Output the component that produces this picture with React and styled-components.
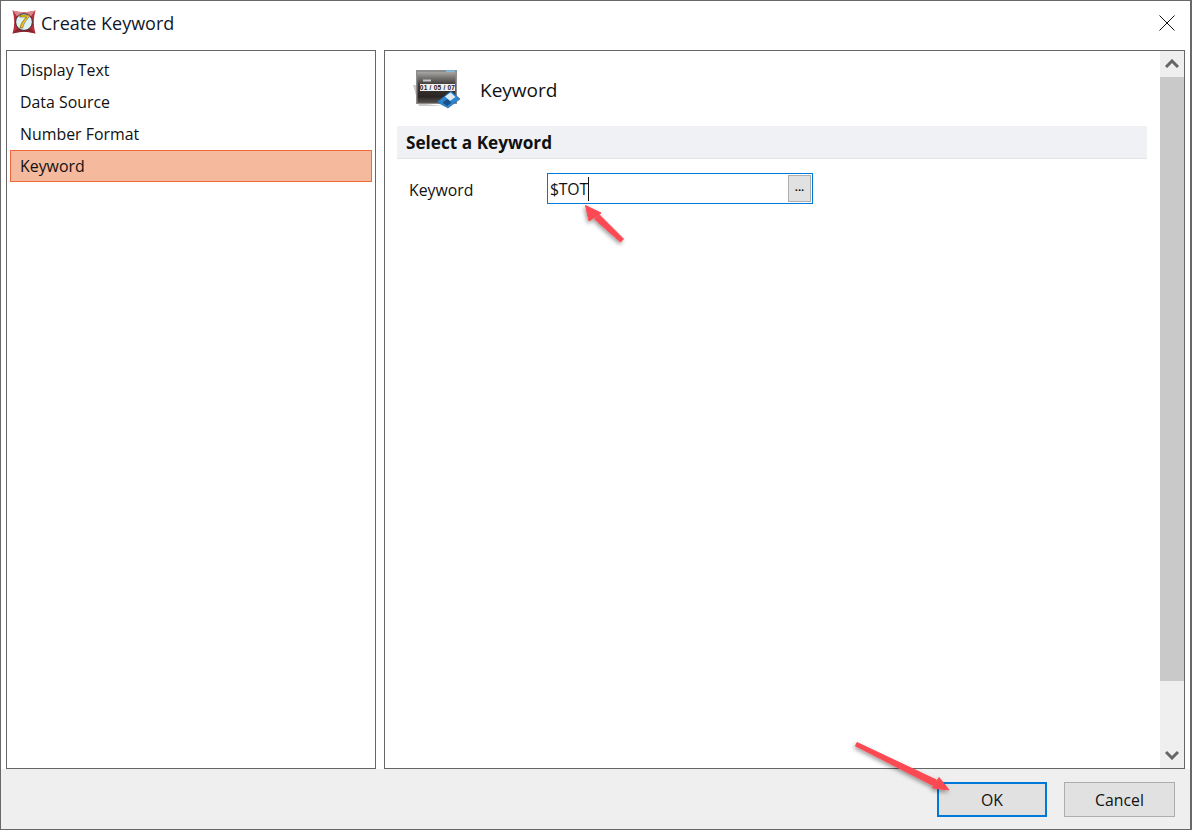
import React from "react";
import styled, { createGlobalStyle } from "styled-components";

const GlobalStyle = createGlobalStyle`
  html, body {
    margin: 0;
    padding: 0;
    background: #fff;
  }
  body {
    font-family: "Open Sans", "Noto Sans", "Liberation Sans", sans-serif;
    color: #111;
  }
`;

const Dialog = styled.div`
  position: relative;
  box-sizing: border-box;
  width: 1192px;
  height: 830px;
  border: 1px solid #686868;
  border-right-width: 2px;
  display: flex;
  flex-direction: column;
  background: #fff;
  overflow: hidden;
`;

const TitleBar = styled.div`
  height: 49px;
  flex: none;
  display: flex;
  align-items: center;
  padding: 0 15px 6px 11px;
  gap: 5px;
  box-sizing: border-box;
`;

const LogoMark = styled.svg`
  flex: none;
  margin-bottom: 2px;
`;

const Title = styled.div`
  font-size: 18px;
  flex: 1;
  color: #101828;
`;

const CloseIcon = styled.svg`
  flex: none;
`;

const Body = styled.div`
  flex: 1;
  display: flex;
  gap: 8px;
  padding: 0 5px 0 5px;
  min-height: 0;
`;

const Panel = styled.div`
  box-sizing: border-box;
  border: 1px solid #666;
  background: #fff;
`;

const NavPanel = styled(Panel)`
  width: 370px;
  flex: none;
  padding: 3px;
`;

const NavItem = styled.div`
  box-sizing: border-box;
  height: 32px;
  display: flex;
  align-items: center;
  padding-left: 9px;
  font-size: 15.9px;
  border: 1px solid ${(p) => (p.$active ? "#f0693a" : "transparent")};
  background: ${(p) => (p.$active ? "#f5b99d" : "transparent")};
`;

const ContentPanel = styled(Panel)`
  flex: 1;
  display: flex;
  min-width: 0;
`;

const Content = styled.div`
  flex: 1;
  min-width: 0;
  padding: 0 13px 0 12px;
`;

const Heading = styled.div`
  height: 75px;
  display: flex;
  align-items: center;
  padding: 2px 0 0 16px;
  box-sizing: border-box;
  gap: 20px;
`;

const HeadingText = styled.div`
  font-size: 19px;
  margin-left: -1px;
`;

const Section = styled.div`
  box-sizing: border-box;
  height: 33px;
  background: #f0f1f5;
  border-bottom: 1px solid #e3e3e6;
  display: flex;
  align-items: center;
  padding: 1px 0 0 9px;
  font-size: 17.2px;
  font-weight: 700;
`;

const FieldRow = styled.div`
  display: flex;
  align-items: center;
  margin-top: 14px;
  padding-left: 13px;
`;

const FieldLabel = styled.div`
  width: 137px;
  font-size: 15.8px;
  padding-top: 2px;
  margin-left: -1px;
  margin-right: 1px;
`;

const FieldInput = styled.div`
  box-sizing: border-box;
  width: 266px;
  height: 31px;
  border: 1px solid #0078d7;
  display: flex;
  align-items: center;
  justify-content: space-between;
  padding: 0 1px 0 2px;
  font-size: 15.8px;
`;

const FieldValue = styled.div`
  border-right: 1px solid #111;
  line-height: 24px;
  height: 24px;
  letter-spacing: -0.2px;
`;

const BrowseButton = styled.div`
  box-sizing: border-box;
  width: 23px;
  height: 27px;
  background: #e1e1e1;
  border: 1px solid #adadad;
  display: flex;
  align-items: center;
  justify-content: center;
  font-size: 11px;
  font-weight: 700;
  padding-bottom: 4px;
`;

const Scrollbar = styled.div`
  width: 24px;
  flex: none;
  background: #efefef;
  display: flex;
  flex-direction: column;
`;

const ScrollButton = styled.div`
  height: 26px;
  flex: none;
  display: flex;
  align-items: center;
  justify-content: center;
`;

const Chevron = styled.svg`
  transform: ${(p) => (p.$down ? "rotate(180deg)" : "none")};
`;

const ScrollThumb = styled.div`
  height: 604px;
  flex: none;
  background: #c9c9c9;
`;

const ScrollTrack = styled.div`
  flex: 1;
`;

const Footer = styled.div`
  height: 60px;
  flex: none;
  background: #efefef;
  display: flex;
  justify-content: flex-end;
  align-items: flex-start;
  gap: 17px;
  padding: 13px 15px 0 0;
  box-sizing: border-box;
`;

const Button = styled.div`
  box-sizing: border-box;
  width: ${(p) => (p.$primary ? "110px" : "111px")};
  height: 35px;
  background: #e1e1e1;
  border: ${(p) => (p.$primary ? "2px solid #0078d7" : "1px solid #adadad")};
  display: flex;
  align-items: center;
  justify-content: center;
  font-size: 15.8px;
`;

const ArrowLayer = styled.svg`
  position: absolute;
  left: -1px;
  top: -1px;
  width: 1192px;
  height: 830px;
  pointer-events: none;
`;

const AppLogo = () => (
  <LogoMark width="24" height="24" viewBox="0 0 24 24">
    <path d="M0.5 0.5 Q12 4 23.5 0.5 Q20 12 23.5 23.5 Q12 20 0.5 23.5 Q4 12 0.5 0.5Z" fill="#b5303c" />
    <path d="M0.5 0.5 Q12 4 23.5 0.5 L19 6 L5 6Z" fill="#d9868c" />
    <path d="M0.5 23.5 Q12 20 23.5 23.5 L19 19 L5 19Z" fill="#8d2530" />
    <circle cx="12" cy="12" r="8.4" fill="#dff2f4" stroke="#3a2a2c" strokeWidth="1" />
    <text x="11.6" y="18.4" textAnchor="middle" fontFamily="Liberation Sans, sans-serif" fontWeight="700" fontStyle="italic" fontSize="18" fill="#f7cc1c" stroke="#4a3410" strokeWidth="0.45">7</text>
  </LogoMark>
);

const KeywordIcon = () => (
  <svg width="48" height="42" viewBox="0 0 48 42">
    <defs>
      <linearGradient id="screen" x1="0" y1="0" x2="0" y2="1">
        <stop offset="0" stopColor="#a6a6a4" />
        <stop offset="0.4" stopColor="#3f3a38" />
        <stop offset="0.8" stopColor="#2a2523" />
        <stop offset="1" stopColor="#5a5552" />
      </linearGradient>
    </defs>
    <path d="M0 16 L4 16 L4 34 L30 37 L6 37Z" fill="#b9b9b9" opacity="0.75" />
    <rect x="3" y="1" width="41" height="34" fill="#8d8d8b" />
    <rect x="4.5" y="3" width="38" height="31" fill="url(#screen)" />
    <rect x="33" y="1.3" width="9" height="1.6" fill="#7fc0e8" />
    <rect x="10" y="10.5" width="8" height="2" fill="#c6c6c6" />
    <rect x="7" y="15" width="35" height="7" fill="#f1f1f1" />
    <text x="24.5" y="21.2" textAnchor="middle" fontFamily="Liberation Sans, sans-serif" fontWeight="700" fontSize="6.6" letterSpacing="0.2" fill="#222">01 / 05 / 07</text>
    <path d="M24 33 L38 22 L47 30 L35 39Z" fill="#2f84cf" stroke="#1f639f" strokeWidth="0.6" />
    <path d="M32 27.5 L37.5 23.5 L42.5 28 L37 32Z" fill="#dcebf6" />
    <path d="M29.5 33.5 L34.5 30 L38.5 33.5 L34 37Z" fill="#174f86" />
  </svg>
);

const ScrollChevron = ({ down }) => (
  <Chevron $down={down} width="14" height="10" viewBox="0 0 14 10">
    <path d="M1 8 L7 2 L13 8" fill="none" stroke="#666" strokeWidth="3" />
  </Chevron>
);

const navItems = ["Display Text", "Data Source", "Number Format", "Keyword"];

export default function App() {
  return (
    <>
      <GlobalStyle />
      <Dialog>
        <TitleBar>
          <AppLogo />
          <Title>Create Keyword</Title>
          <CloseIcon width="16" height="16" viewBox="0 0 16 16">
            <path d="M0.5 0.5 L15.5 15.5 M15.5 0.5 L0.5 15.5" stroke="#111" strokeWidth="1" />
          </CloseIcon>
        </TitleBar>
        <Body>
          <NavPanel>
            {navItems.map((item) => (
              <NavItem key={item} $active={item === "Keyword"}>
                {item}
              </NavItem>
            ))}
          </NavPanel>
          <ContentPanel>
            <Content>
              <Heading>
                <KeywordIcon />
                <HeadingText>Keyword</HeadingText>
              </Heading>
              <Section>Select a Keyword</Section>
              <FieldRow>
                <FieldLabel>Keyword</FieldLabel>
                <FieldInput>
                  <FieldValue>$TOT</FieldValue>
                  <BrowseButton>...</BrowseButton>
                </FieldInput>
              </FieldRow>
            </Content>
            <Scrollbar>
              <ScrollButton>
                <ScrollChevron />
              </ScrollButton>
              <ScrollThumb />
              <ScrollTrack />
              <ScrollButton>
                <ScrollChevron down />
              </ScrollButton>
            </Scrollbar>
          </ContentPanel>
        </Body>
        <Footer>
          <Button $primary>OK</Button>
          <Button>Cancel</Button>
        </Footer>
        <ArrowLayer viewBox="0 0 1192 830">
          <defs>
            <filter id="arrowShadow" x="-30%" y="-30%" width="160%" height="160%">
              <feDropShadow dx="-1" dy="2" stdDeviation="2" floodColor="#000" floodOpacity="0.4" />
            </filter>
          </defs>
          <g filter="url(#arrowShadow)" fill="#fb4a52" stroke="#fb4a52" strokeLinejoin="round">
            <path d="M620.5 242 L623.5 239 L599 214.5 L594.5 219Z" strokeWidth="1" />
            <path d="M585.5 205.5 L601 213 L589 221Z" strokeWidth="1" />
            <path d="M855.5 746 L857 742.5 L936.5 780 L934 786Z" strokeWidth="1" />
            <path d="M949 790 L939 777.5 L932.5 788Z" strokeWidth="1" />
          </g>
        </ArrowLayer>
      </Dialog>
    </>
  );
}
